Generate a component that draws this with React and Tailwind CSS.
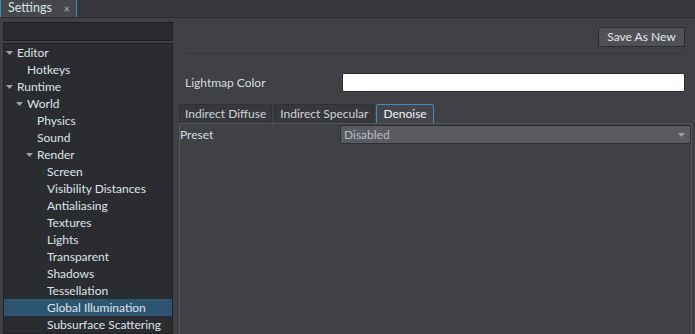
const TREE = [
  { label: 'Editor', level: 0, open: true },
  { label: 'Hotkeys', level: 1 },
  { label: 'Runtime', level: 0, open: true },
  { label: 'World', level: 1, open: true },
  { label: 'Physics', level: 2 },
  { label: 'Sound', level: 2 },
  { label: 'Render', level: 2, open: true },
  { label: 'Screen', level: 3 },
  { label: 'Visibility Distances', level: 3 },
  { label: 'Antialiasing', level: 3 },
  { label: 'Textures', level: 3 },
  { label: 'Lights', level: 3 },
  { label: 'Transparent', level: 3 },
  { label: 'Shadows', level: 3 },
  { label: 'Tessellation', level: 3 },
  { label: 'Global Illumination', level: 3, selected: true },
  { label: 'Subsurface Scattering', level: 3 },
]

const PAD = ['pl-[2px]', 'pl-[12px]', 'pl-[22px]', 'pl-[32px]']

function Arrow({ className = '' }) {
  return (
    <svg width="7" height="4" viewBox="0 0 7 4" className={className}>
      <path d="M0 0h7L3.5 4z" fill="#9ea2a7" />
    </svg>
  )
}

/* ---------------- TREE ---------------- */
function Tree() {
  return (
    <div className="flex-1 bg-[#2b2c2f] border border-[#1f2022] overflow-hidden">
      {TREE.map(item => (
        <div
          key={item.label}
          className={`h-[17px] flex items-center ${PAD[item.level]} ${item.selected ? 'bg-[#2d5571]' : ''}`}
        >
          {item.open ? <Arrow className="mr-[4px] shrink-0" /> : <span className="w-[11px] shrink-0" />}
          <span className="text-[#dde4ec] whitespace-nowrap">{item.label}</span>
        </div>
      ))}
    </div>
  )
}

/* ---------------- APP ---------------- */
export default function App() {
  return (
    <div
      className="w-[695px] h-[334px] overflow-hidden bg-[#404145] flex flex-col text-[12px] leading-none text-[#dde2e8]"
      style={{ fontFamily: 'Lato, "Liberation Sans", sans-serif' }}
    >
      {/* TAB BAR */}
      <div className="h-[18px] shrink-0 bg-[#37383c] border-b border-[#2c2d30] flex items-end">
        <div className="h-[18px] w-[77px] bg-[#46474b] border border-b-0 border-[#3a8ec6] rounded-t-[2px] flex items-center justify-between pl-[7px] pr-[6px]">
          <span className="text-[12.5px]">Settings</span>
          <span className="text-[11px] text-[#a9adb2]">×</span>
        </div>
      </div>

      <div className="flex-1 flex min-h-0">
        {/* LEFT */}
        <div className="w-[176px] shrink-0 flex flex-col px-[3px] pt-[4px] gap-[2px]">
          <div className="h-[19px] shrink-0 bg-[#2a2b2e] border border-[#1f2022]" />
          <Tree />
        </div>

        {/* RIGHT */}
        <div className="flex-1 flex flex-col pl-[3px] pr-[3px]">
          <div className="px-[6px] pr-[7px]">
            <div className="flex justify-end pt-[9px] pb-[6px] border-b border-[#36373a]">
              <button className="h-[20px] w-[87px] bg-[#505156] border border-[#2c2d30] rounded-[2px] text-[#e4e8ec]">
                Save As New
              </button>
            </div>
            <div className="flex items-center mt-[19px] h-[19px]">
              <span className="w-[157px] text-[#d6dbe1]">Lightmap Color</span>
              <div className="flex-1 h-[19px] bg-white border border-[#2c2d30] rounded-[2px]" />
            </div>
          </div>

          {/* TABS */}
          <div className="flex gap-[2px] mt-[12px] h-[19px] whitespace-nowrap">
            <div className="shrink-0 px-[5px] flex items-center bg-[#37383c] border border-b-0 border-[#303134] rounded-t-[2px] text-[#cfd4da]">Indirect Diffuse</div>
            <div className="shrink-0 px-[5px] flex items-center bg-[#37383c] border border-b-0 border-[#303134] rounded-t-[2px] text-[#cfd4da]">Indirect Specular</div>
            <div className="shrink-0 px-[6px] flex items-center bg-[#45464a] border border-b-0 border-[#3a8ec6] rounded-t-[2px] text-[#eef2f6]">Denoise</div>
          </div>
          <div className="flex-1 border-l border-r border-t border-[#55565a]">
            <div className="flex items-center h-[19px] mt-px">
              <span className="w-[160px] text-[#d6dbe1]">Preset</span>
              <div className="flex-1 h-[19px] bg-[#5a5b60] border border-[#2e2f32] rounded-[2px] flex items-center justify-between pl-[3px] pr-[5px]">
                <span className="text-[#b8bdc2]">Disabled</span>
                <Arrow />
              </div>
            </div>
          </div>
        </div>
      </div>
    </div>
  )
}
